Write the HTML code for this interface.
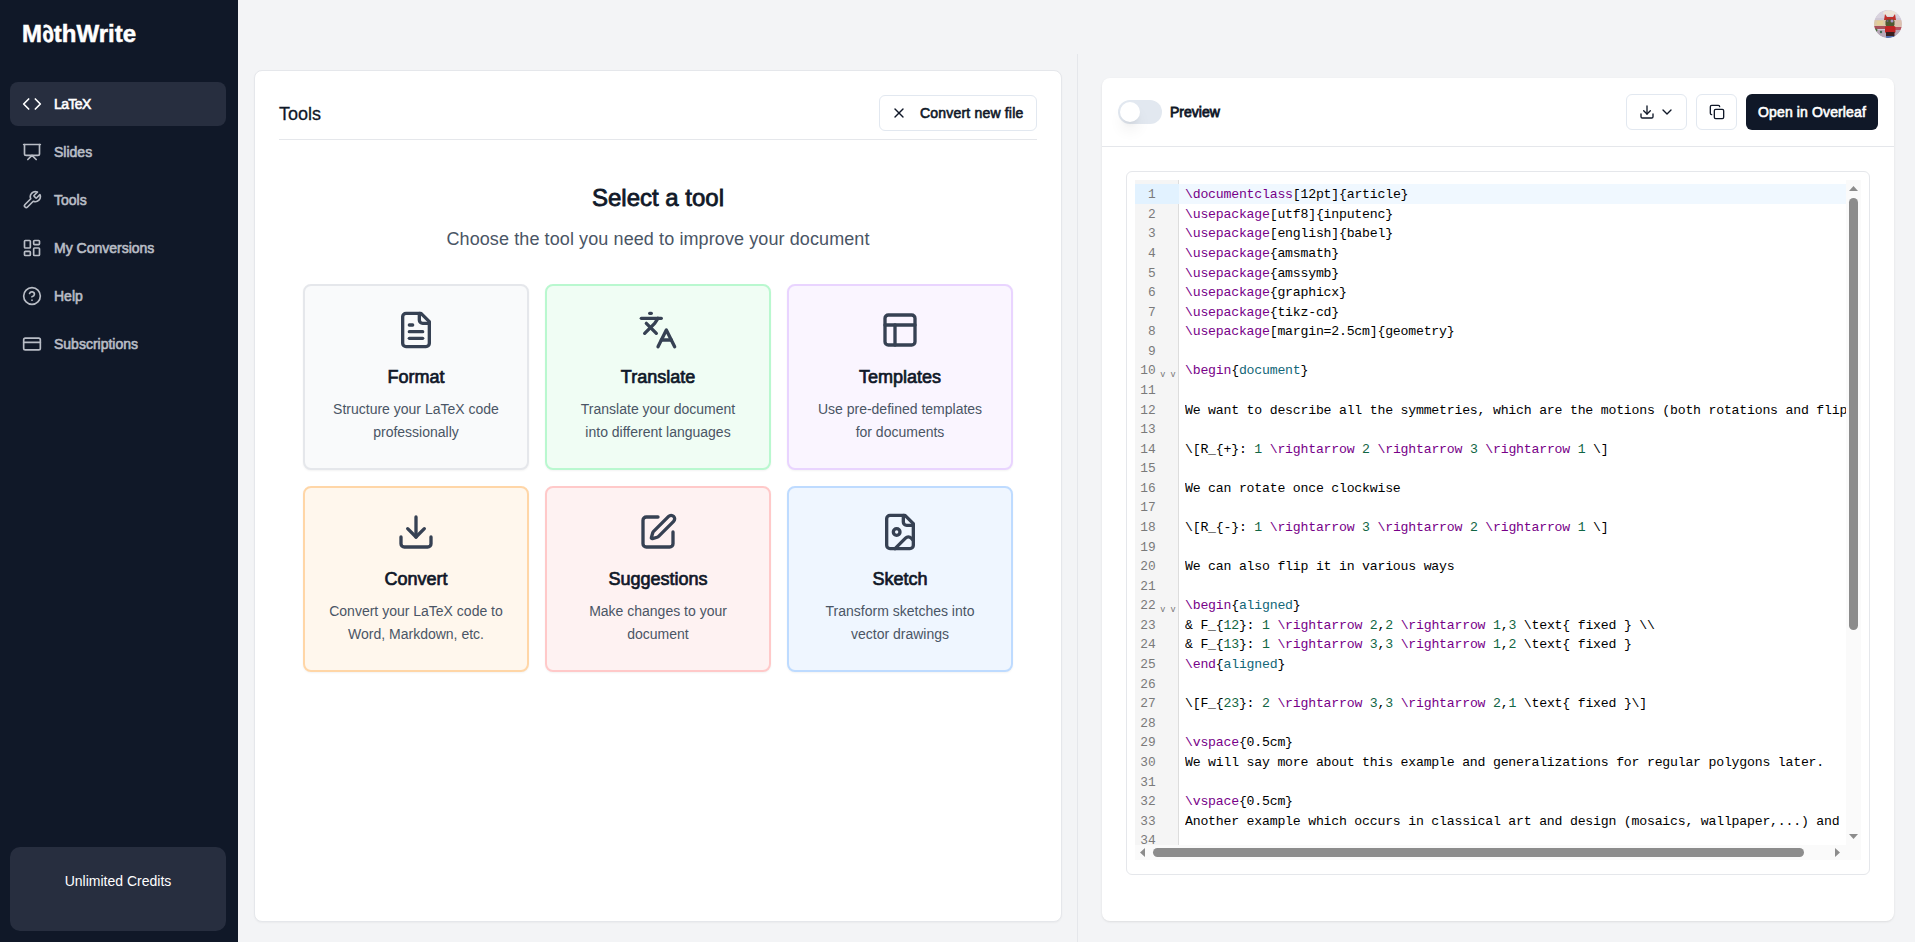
<!DOCTYPE html>
<html><head><meta charset="utf-8">
<style>
*{box-sizing:border-box;margin:0;padding:0}
html,body{width:1915px;height:942px;overflow:hidden;background:#f3f4f6;font-family:"Liberation Sans",sans-serif;color:#101828}
#side{position:absolute;left:0;top:0;width:238px;height:942px;background:#101828}
#logo{position:absolute;left:22px;top:18px;font-size:24px;line-height:32px;font-weight:bold;color:#fff;letter-spacing:0px;-webkit-text-stroke:0.5px #fff}
#logo i{font-style:normal;display:inline-block;transform:skewX(14deg)}
.nav{position:absolute;left:10px;width:216px;height:44px;border-radius:8px;color:#b9bdc6;font-size:14px;line-height:44px;font-weight:normal;letter-spacing:0;-webkit-text-stroke:0.6px currentColor}
.nav.active{background:#272e3f;color:#fff}
.nav svg{position:absolute;left:12px;top:12px;width:20px;height:20px}
.nav span{position:absolute;left:44px;top:0}
#credits{position:absolute;left:10px;top:847px;width:216px;height:84px;border-radius:10px;background:#272e3f;color:#fff;font-size:14px;text-align:center;line-height:68px}
#vdiv{position:absolute;left:1077px;top:54px;width:1px;height:888px;background:#e5e7eb}
#lcard{position:absolute;left:254px;top:70px;width:808px;height:852px;background:#fff;border:1px solid #e5e7eb;border-radius:8px;box-shadow:0 1px 2px rgba(0,0,0,.04)}
#ltitle{position:absolute;left:24px;top:29px;font-size:18px;line-height:28px;font-weight:normal;color:#101828;-webkit-text-stroke:0.3px #101828}
#lhr{position:absolute;left:24px;top:68px;width:758px;height:1px;background:#e5e7eb}
#cnf{position:absolute;left:624px;top:24px;width:158px;height:36px;border:1px solid #e2e8f0;border-radius:6px;font-size:14px;font-weight:normal;letter-spacing:0.19px;-webkit-text-stroke:0.6px #101828;line-height:34px;color:#101828}
#cnf svg{position:absolute;left:11px;top:9px;width:16px;height:16px}
#cnf span{position:absolute;left:40px;top:0}
#sel{position:absolute;left:0;width:806px;top:111px;text-align:center;font-size:24px;line-height:32px;font-weight:normal;letter-spacing:0;-webkit-text-stroke:0.8px #101828;color:#101828}
#sub{position:absolute;left:0;width:806px;top:154px;text-align:center;font-size:18px;line-height:28px;color:#4a5565;letter-spacing:0.1px}
.tc{position:absolute;width:226px;border:2px solid;border-radius:8px;padding:24px;text-align:center;box-shadow:0 1px 2px rgba(0,0,0,.05)}
.tc svg{display:block;width:40px;height:40px;margin:0 auto 12px;stroke:#364153}
.tc h3{font-size:18px;line-height:28px;font-weight:normal;letter-spacing:0;-webkit-text-stroke:0.7px #101828;color:#101828;margin-bottom:8px;position:relative;top:1px}
.tc p{font-size:14px;line-height:22.75px;color:#4a5565}
#rcard{position:absolute;left:1102px;top:78px;width:792px;height:843px;background:#fff;border-radius:8px;box-shadow:0 1px 3px rgba(0,0,0,.06),0 1px 2px rgba(0,0,0,.04)}
#rhr{position:absolute;left:0;top:68px;width:792px;height:1px;background:#e5e7eb}
#tog{position:absolute;left:16px;top:22px;width:44px;height:24px;border-radius:12px;background:#e2e8f0}
#knob{position:absolute;left:2px;top:2px;width:20px;height:20px;border-radius:10px;background:#fff;box-shadow:0 10px 15px -3px rgba(0,0,0,.1),0 4px 6px -4px rgba(0,0,0,.1)}
#prev{position:absolute;left:68px;top:22px;font-size:14px;line-height:24px;font-weight:normal;letter-spacing:0;-webkit-text-stroke:0.8px #101828;color:#101828}
.btn{position:absolute;top:16px;height:36px;border:1px solid #e2e8f0;border-radius:6px;background:#fff}
.btn svg{position:absolute}
#ovl{position:absolute;left:644px;top:16px;width:132px;height:36px;border-radius:6px;background:#101828;color:#fff;font-size:14px;font-weight:normal;letter-spacing:0.13px;-webkit-text-stroke:0.6px #fff;line-height:36px;text-align:center}
#ed{position:absolute;left:24px;top:93px;width:744px;height:704px;border:1px solid #e5e7eb;border-radius:6px}
#view{position:absolute;left:8px;top:8px;width:726px;height:680px;overflow:hidden;background:#fff}
#gut{position:absolute;left:0;top:0;width:44px;height:665px;background:#f5f5f5;border-right:1px solid #ddd}
#nums{position:absolute;left:0;top:4px;width:20.6px}
.gn{height:19.59px;line-height:19.59px;text-align:right;font-family:"Liberation Mono",monospace;font-size:12.83px;color:#7a7a7a;padding-top:1.2px}
#code{position:absolute;left:50px;top:4px;width:661px;height:661px;overflow:hidden}
.ln{height:19.59px;line-height:19.59px;white-space:pre;font-family:"Liberation Mono",monospace;font-size:13.2px;letter-spacing:-0.215px;color:#000;padding-top:1.2px}
.ln b{font-weight:normal}
.k{color:#708}.n{color:#164}.a{color:#167}
#aline{position:absolute;left:0;top:4px;width:711px;height:20px;background:#f0f8ff}
#agut{position:absolute;left:0;top:4px;width:44px;height:20px;background:#e2f2ff}
.fold{position:absolute;left:25.2px;white-space:pre;font-family:"Liberation Mono",monospace;font-size:8.5px;line-height:10px;letter-spacing:0px;color:#777}
#vsb{position:absolute;left:711px;top:0;width:15px;height:665px;background:#fafafa}
#hsb{position:absolute;left:0;top:665px;width:711px;height:15px;background:#fafafa}
#corner{position:absolute;left:711px;top:665px;width:15px;height:15px;background:#fafafa}
</style></head><body>
<div id="side">
  <div id="logo">M<i>&#8706;</i>thWrite</div>
  <div class="nav active" style="top:82px"><svg viewBox="0 0 24 24" fill="none" stroke="#fff" stroke-width="2" stroke-linecap="round" stroke-linejoin="round"><polyline points="16 18 22 12 16 6"/><polyline points="8 6 2 12 8 18"/></svg><span style="letter-spacing:-0.6px">LaTeX</span></div>
  <div class="nav" style="top:130px"><svg viewBox="0 0 24 24" fill="none" stroke="currentColor" stroke-width="2" stroke-linecap="round" stroke-linejoin="round"><path d="M2 3h20"/><path d="M21 3v11a2 2 0 0 1-2 2H5a2 2 0 0 1-2-2V3"/><path d="m7 21 5-5 5 5"/></svg><span>Slides</span></div>
  <div class="nav" style="top:178px"><svg viewBox="0 0 24 24" fill="none" stroke="currentColor" stroke-width="2" stroke-linecap="round" stroke-linejoin="round"><path d="M14.7 6.3a1 1 0 0 0 0 1.4l1.6 1.6a1 1 0 0 0 1.4 0l3.77-3.77a6 6 0 0 1-7.94 7.94l-6.91 6.91a2.12 2.12 0 0 1-3-3l6.91-6.91a6 6 0 0 1 7.940-7.94l-3.76 3.76z"/></svg><span>Tools</span></div>
  <div class="nav" style="top:226px"><svg viewBox="0 0 24 24" fill="none" stroke="currentColor" stroke-width="2" stroke-linecap="round" stroke-linejoin="round"><rect width="7" height="9" x="3" y="3" rx="1"/><rect width="7" height="5" x="14" y="3" rx="1"/><rect width="7" height="9" x="14" y="12" rx="1"/><rect width="7" height="5" x="3" y="16" rx="1"/></svg><span>My Conversions</span></div>
  <div class="nav" style="top:274px"><svg viewBox="0 0 24 24" fill="none" stroke="currentColor" stroke-width="2" stroke-linecap="round" stroke-linejoin="round"><circle cx="12" cy="12" r="10"/><path d="M9.09 9a3 3 0 0 1 5.83 1c0 2-3 3-3 3"/><path d="M12 17h.01"/></svg><span>Help</span></div>
  <div class="nav" style="top:322px"><svg viewBox="0 0 24 24" fill="none" stroke="currentColor" stroke-width="2" stroke-linecap="round" stroke-linejoin="round"><rect width="20" height="14" x="2" y="5" rx="2"/><line x1="2" x2="22" y1="10" y2="10"/></svg><span>Subscriptions</span></div>
  <div id="credits">Unlimited Credits</div>
</div>
<div id="vdiv"></div>
<div id="lcard">
  <div id="ltitle">Tools</div>
  <div id="cnf"><svg viewBox="0 0 24 24" fill="none" stroke="#101828" stroke-width="2" stroke-linecap="round" stroke-linejoin="round"><path d="M18 6 6 18"/><path d="m6 6 12 12"/></svg><span>Convert new file</span></div>
  <div id="lhr"></div>
  <div id="sel">Select a tool</div>
  <div id="sub">Choose the tool you need to improve your document</div>
  <div class="tc" style="left:48px;top:213px;background:#f9fafb;border-color:#e5e7eb">
    <svg viewBox="0 0 24 24" fill="none" stroke-width="2" stroke-linecap="round" stroke-linejoin="round"><path d="M15 2H6a2 2 0 0 0-2 2v16a2 2 0 0 0 2 2h12a2 2 0 0 0 2-2V7Z"/><path d="M14 2v4a2 2 0 0 0 2 2h4"/><path d="M10 9H8"/><path d="M16 13H8"/><path d="M16 17H8"/></svg>
    <h3>Format</h3><p>Structure your LaTeX code<br>professionally</p></div>
  <div class="tc" style="left:290px;top:213px;background:#f0fdf4;border-color:#b9f8cf">
    <svg viewBox="0 0 24 24" fill="none" stroke-width="2" stroke-linecap="round" stroke-linejoin="round"><path d="m5 8 6 6"/><path d="m4 14 6-6 2-3"/><path d="M2 5h12"/><path d="M7 2h1"/><path d="m22 22-5-10-5 10"/><path d="M14 18h6"/></svg>
    <h3>Translate</h3><p>Translate your document<br>into different languages</p></div>
  <div class="tc" style="left:532px;top:213px;background:#faf5ff;border-color:#e9d4ff">
    <svg viewBox="0 0 24 24" fill="none" stroke-width="2" stroke-linecap="round" stroke-linejoin="round"><rect width="18" height="18" x="3" y="3" rx="2"/><path d="M3 9h18"/><path d="M9 21V9"/></svg>
    <h3>Templates</h3><p>Use pre-defined templates<br>for documents</p></div>
  <div class="tc" style="left:48px;top:415px;background:#fff7ed;border-color:#ffd6a7">
    <svg viewBox="0 0 24 24" fill="none" stroke-width="2" stroke-linecap="round" stroke-linejoin="round"><path d="M21 15v4a2 2 0 0 1-2 2H5a2 2 0 0 1-2-2v-4"/><polyline points="7 10 12 15 17 10"/><line x1="12" x2="12" y1="15" y2="3"/></svg>
    <h3>Convert</h3><p>Convert your LaTeX code to<br>Word, Markdown, etc.</p></div>
  <div class="tc" style="left:290px;top:415px;background:#fef2f2;border-color:#ffc9c9">
    <svg viewBox="0 0 24 24" fill="none" stroke-width="2" stroke-linecap="round" stroke-linejoin="round"><path d="M12 3H5a2 2 0 0 0-2 2v14a2 2 0 0 0 2 2h14a2 2 0 0 0 2-2v-7"/><path d="M18.375 2.625a1 1 0 0 1 3 3l-9.013 9.014a2 2 0 0 1-.853.505l-2.873.84a.5.5 0 0 1-.62-.62l.84-2.873a2 2 0 0 1 .506-.852z"/></svg>
    <h3>Suggestions</h3><p>Make changes to your<br>document</p></div>
  <div class="tc" style="left:532px;top:415px;background:#eff6ff;border-color:#bedbff">
    <svg viewBox="0 0 24 24" fill="none" stroke-width="2" stroke-linecap="round" stroke-linejoin="round"><path d="M15 2H6a2 2 0 0 0-2 2v16a2 2 0 0 0 2 2h12a2 2 0 0 0 2-2V7Z"/><path d="M14 2v4a2 2 0 0 0 2 2h4"/><circle cx="10" cy="12" r="2"/><path d="m20 17-1.296-1.296a2.41 2.41 0 0 0-3.408 0L9 22"/></svg>
    <h3>Sketch</h3><p>Transform sketches into<br>vector drawings</p></div>
</div>
<svg style="position:absolute;left:1874px;top:10px;border-radius:14px;overflow:hidden" width="28" height="28" viewBox="0 0 28 28">
<defs><clipPath id="cc"><circle cx="14" cy="14" r="14"/></clipPath><filter id="bl" x="-10%" y="-10%" width="120%" height="120%"><feGaussianBlur stdDeviation="0.65"/></filter></defs>
<g clip-path="url(#cc)"><g>
<rect x="-2" y="-2" width="32" height="32" fill="#cfc8d6"/>
<rect x="-2" y="-2" width="32" height="10" fill="#d9d3de"/>
<ellipse cx="16" cy="3" rx="7" ry="3" fill="#ece4d8"/>
<rect x="-2" y="10" width="14" height="7" fill="#dcc8a8"/><rect x="3" y="11" width="6" height="4" fill="#e2cf98"/>
<rect x="-2" y="16" width="14" height="3" fill="#a8505a"/>
<rect x="20" y="10" width="10" height="8" fill="#dcc0b0"/>
<rect x="20" y="17" width="10" height="4" fill="#b85060"/>
<rect x="-2" y="20" width="32" height="10" fill="#b8a8b8"/>
<circle cx="2" cy="20" r="1.5" fill="#4a7040"/>
<circle cx="7" cy="22" r="1.2" fill="#3a6a50"/>
<path d="M10 10 L11 4 L13 7 L19 7 L21 4 L22 10 Z" fill="#c0302a"/>
<rect x="11.5" y="9.5" width="9" height="7" rx="2" fill="#4f5a32"/>
<circle cx="18" cy="11" r="1.5" fill="#a898c8"/>
<circle cx="13.5" cy="11" r="1" fill="#706080"/>
<rect x="11" y="16" width="10.5" height="7" rx="1.5" fill="#c02424"/>
<rect x="12" y="22" width="8.5" height="5" fill="#3a2020"/>
<rect x="12" y="26" width="12" height="2" fill="#5070b0"/>
</g></g></svg>
<div id="rcard">
  <div id="tog"><div id="knob"></div></div>
  <div id="prev">Preview</div>
  <div class="btn" style="left:524px;width:61px">
    <svg style="left:12px;top:8.7px;width:16px;height:16px" viewBox="0 0 24 24" fill="none" stroke="#101828" stroke-width="2" stroke-linecap="round" stroke-linejoin="round"><path d="M21 15v4a2 2 0 0 1-2 2H5a2 2 0 0 1-2-2v-4"/><polyline points="7 10 12 15 17 10"/><line x1="12" x2="12" y1="15" y2="3"/></svg>
    <svg style="left:32px;top:9px;width:16px;height:16px" viewBox="0 0 24 24" fill="none" stroke="#101828" stroke-width="2" stroke-linecap="round" stroke-linejoin="round"><path d="m6 9 6 6 6-6"/></svg>
  </div>
  <div class="btn" style="left:594px;width:41px">
    <svg style="left:12px;top:8.7px;width:16px;height:16px" viewBox="0 0 24 24" fill="none" stroke="#101828" stroke-width="2" stroke-linecap="round" stroke-linejoin="round"><rect width="14" height="14" x="8" y="8" rx="2" ry="2"/><path d="M4 16c-1.1 0-2-.9-2-2V4c0-1.1.9-2 2-2h10c1.1 0 2 .9 2 2"/></svg>
  </div>
  <div id="ovl">Open in Overleaf</div>
  <div id="rhr"></div>
  <div id="ed"><div id="view">
    <div id="gut"><div id="agut"></div><div id="nums">
<div class="gn">1</div>
<div class="gn">2</div>
<div class="gn">3</div>
<div class="gn">4</div>
<div class="gn">5</div>
<div class="gn">6</div>
<div class="gn">7</div>
<div class="gn">8</div>
<div class="gn">9</div>
<div class="gn">10</div>
<div class="gn">11</div>
<div class="gn">12</div>
<div class="gn">13</div>
<div class="gn">14</div>
<div class="gn">15</div>
<div class="gn">16</div>
<div class="gn">17</div>
<div class="gn">18</div>
<div class="gn">19</div>
<div class="gn">20</div>
<div class="gn">21</div>
<div class="gn">22</div>
<div class="gn">23</div>
<div class="gn">24</div>
<div class="gn">25</div>
<div class="gn">26</div>
<div class="gn">27</div>
<div class="gn">28</div>
<div class="gn">29</div>
<div class="gn">30</div>
<div class="gn">31</div>
<div class="gn">32</div>
<div class="gn">33</div>
<div class="gn">34</div>    </div>
    <div class="fold" style="top:189.5px">v v</div>
    <div class="fold" style="top:424.6px">v v</div>
    </div>
    <div id="aline" style="left:44px;width:667px"></div>
    <div id="code">
<div class="ln"><b class="k">\documentclass</b>[12pt]{article}</div>
<div class="ln"><b class="k">\usepackage</b>[utf8]{inputenc}</div>
<div class="ln"><b class="k">\usepackage</b>[english]{babel}</div>
<div class="ln"><b class="k">\usepackage</b>{amsmath}</div>
<div class="ln"><b class="k">\usepackage</b>{amssymb}</div>
<div class="ln"><b class="k">\usepackage</b>{graphicx}</div>
<div class="ln"><b class="k">\usepackage</b>{tikz-cd}</div>
<div class="ln"><b class="k">\usepackage</b>[margin=2.5cm]{geometry}</div>
<div class="ln"></div>
<div class="ln"><b class="k">\begin</b>{<b class="a">document</b>}</div>
<div class="ln"></div>
<div class="ln">We want to describe all the symmetries, which are the motions (both rotations and flips) of an equilateral triangle</div>
<div class="ln"></div>
<div class="ln">\[R_{+}: <b class="n">1</b> <b class="k">\rightarrow</b> <b class="n">2</b> <b class="k">\rightarrow</b> <b class="n">3</b> <b class="k">\rightarrow</b> <b class="n">1</b> \]</div>
<div class="ln"></div>
<div class="ln">We can rotate once clockwise</div>
<div class="ln"></div>
<div class="ln">\[R_{-}: <b class="n">1</b> <b class="k">\rightarrow</b> <b class="n">3</b> <b class="k">\rightarrow</b> <b class="n">2</b> <b class="k">\rightarrow</b> <b class="n">1</b> \]</div>
<div class="ln"></div>
<div class="ln">We can also flip it in various ways</div>
<div class="ln"></div>
<div class="ln"><b class="k">\begin</b>{<b class="a">aligned</b>}</div>
<div class="ln">&amp; F_{<b class="n">12</b>}: <b class="n">1</b> <b class="k">\rightarrow</b> <b class="n">2</b>,<b class="n">2</b> <b class="k">\rightarrow</b> <b class="n">1</b>,<b class="n">3</b> \text{ fixed } \\</div>
<div class="ln">&amp; F_{<b class="n">13</b>}: <b class="n">1</b> <b class="k">\rightarrow</b> <b class="n">3</b>,<b class="n">3</b> <b class="k">\rightarrow</b> <b class="n">1</b>,<b class="n">2</b> \text{ fixed }</div>
<div class="ln"><b class="k">\end</b>{<b class="a">aligned</b>}</div>
<div class="ln"></div>
<div class="ln">\[F_{<b class="n">23</b>}: <b class="n">2</b> <b class="k">\rightarrow</b> <b class="n">3</b>,<b class="n">3</b> <b class="k">\rightarrow</b> <b class="n">2</b>,<b class="n">1</b> \text{ fixed }\]</div>
<div class="ln"></div>
<div class="ln"><b class="k">\vspace</b>{0.5cm}</div>
<div class="ln">We will say more about this example and generalizations for regular polygons later.</div>
<div class="ln"></div>
<div class="ln"><b class="k">\vspace</b>{0.5cm}</div>
<div class="ln">Another example which occurs in classical art and design (mosaics, wallpaper,...) and architecture</div>
<div class="ln"></div>    </div>
    <div id="vsb">
      <svg style="position:absolute;left:3px;top:6px" width="9" height="6" viewBox="0 0 9 6"><path d="M4.5 0L9 5H0z" fill="#8c8c8c"/></svg>
      <div style="position:absolute;left:3px;top:18px;width:9px;height:432px;border-radius:4.5px;background:#8c8c8c"></div>
      <svg style="position:absolute;left:3px;top:654px" width="9" height="6" viewBox="0 0 9 6"><path d="M0 0H9L4.5 5z" fill="#8c8c8c"/></svg>
    </div>
    <div id="hsb">
      <svg style="position:absolute;left:5px;top:3px" width="6" height="9" viewBox="0 0 6 9"><path d="M0 4.5L5 0V9z" fill="#8c8c8c"/></svg>
      <div style="position:absolute;left:18px;top:3px;width:651px;height:9px;border-radius:4.5px;background:#8c8c8c"></div>
      <svg style="position:absolute;left:700px;top:3px" width="6" height="9" viewBox="0 0 6 9"><path d="M0 0L5 4.5L0 9z" fill="#8c8c8c"/></svg>
    </div>
    <div id="corner"></div>
  </div></div>
</div>
</body></html>
